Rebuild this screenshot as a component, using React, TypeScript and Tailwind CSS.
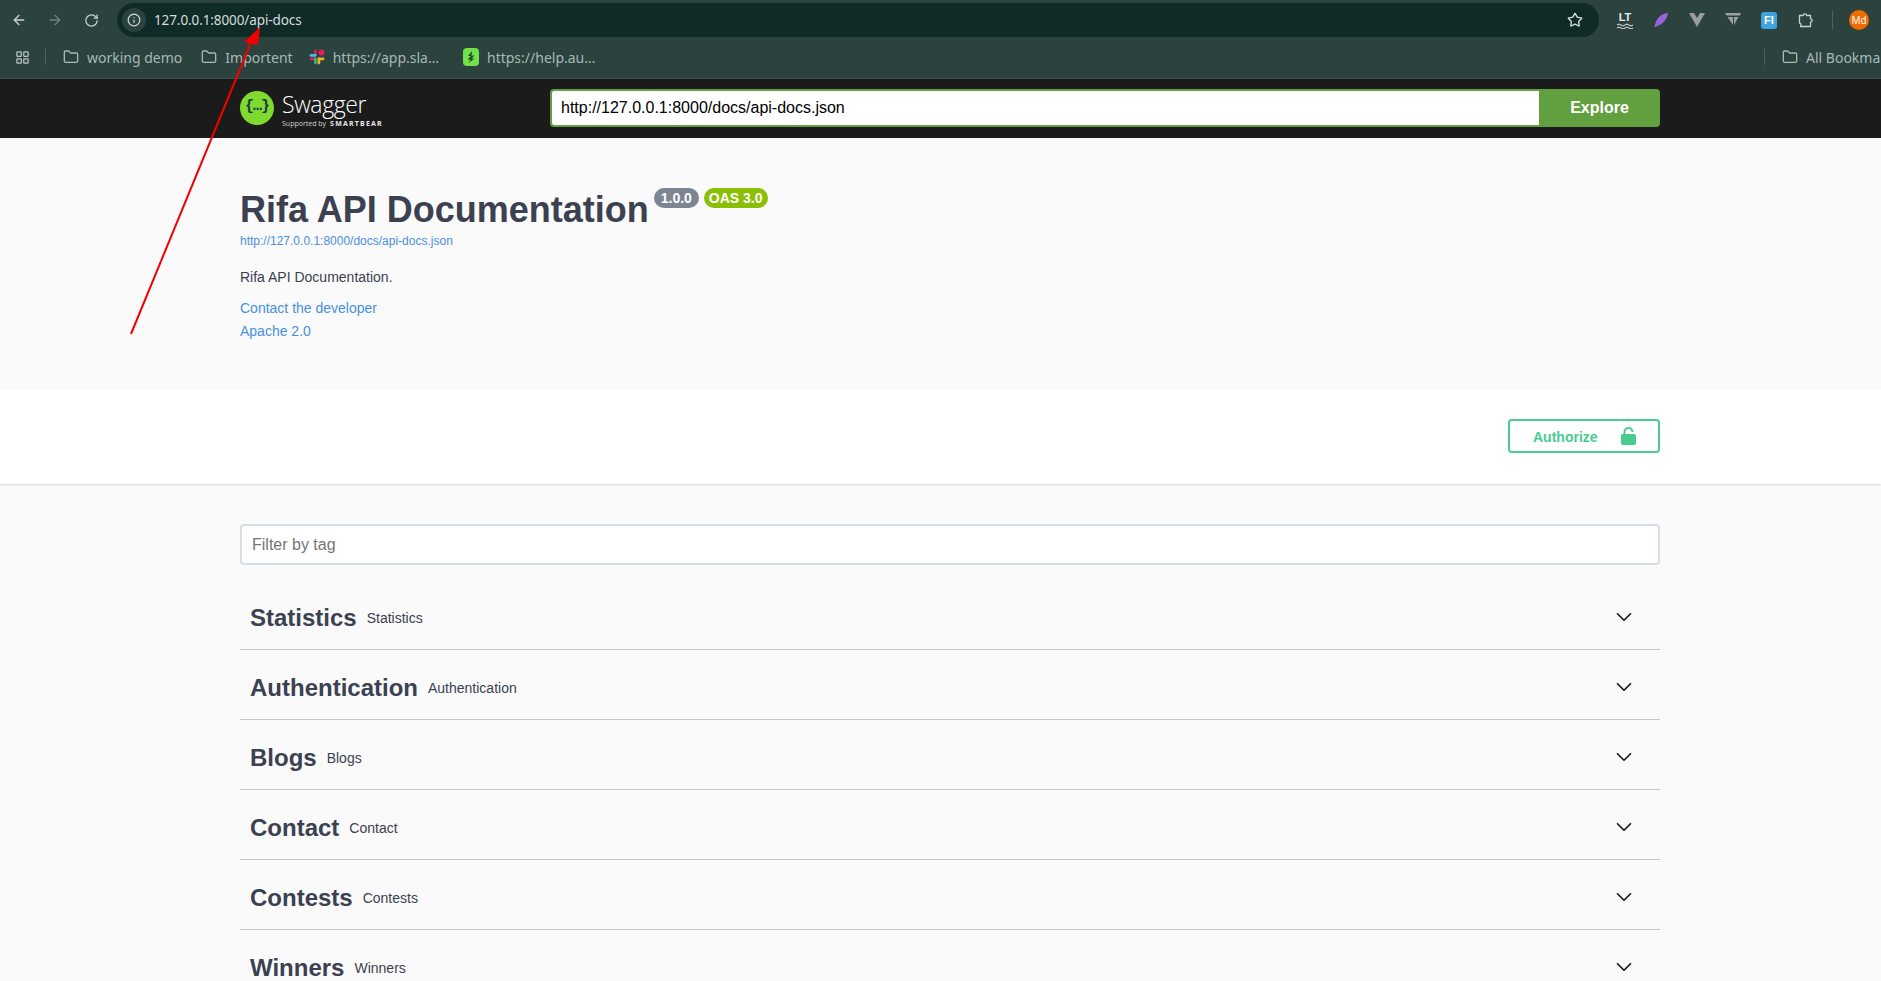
import { ArrowLeft, ArrowRight, ChevronDown, Folder, Info, LayoutGrid, RotateCw, Star } from "lucide-react"

const tags = [
  ["Statistics", "Statistics"],
  ["Authentication", "Authentication"],
  ["Blogs", "Blogs"],
  ["Contact", "Contact"],
  ["Contests", "Contests"],
  ["Winners", "Winners"],
]

function Bookmark({ icon, label, className }: { icon: React.ReactNode; label: string; className?: string }) {
  return (
    <div className={`flex items-center gap-2 whitespace-nowrap text-[14px] text-[#a7b8b5] ${className ?? ""}`}>
      {icon}
      <span>{label}</span>
    </div>
  )
}

function SlackIcon() {
  return (
    <svg width="16" height="16" viewBox="0 0 16 16" className="shrink-0">
      <rect x="5" y="0.500" width="2.800" height="7" rx="1.400" fill="#e01e5a" />
      <rect x="0.500" y="5" width="7" height="2.800" rx="1.400" fill="#36c5f0" />
      <circle cx="12.500" cy="3.500" r="3" fill="#e01e5a" />
      <rect x="8.500" y="8.500" width="7" height="2.800" rx="1.400" fill="#ecb22e" />
      <rect x="8.500" y="8.500" width="2.800" height="7" rx="1.400" fill="#ecb22e" />
      <rect x="0.500" y="8.500" width="7" height="2.800" rx="1.400" fill="#e01e5a" />
      <rect x="5" y="8.500" width="2.800" height="7" rx="1.400" fill="#2eb67d" />
    </svg>
  )
}

function TreeIcon() {
  return (
    <svg width="16" height="18" viewBox="0 0 16 18" className="shrink-0">
      <rect width="16" height="18" rx="4" fill="#72e04a" />
      <path d="M9 3 5 8h3L4.500 11.500h3L5.500 15l6-4.500h-3l3-3H8.500z" fill="#1f4a2a" />
    </svg>
  )
}

function LockIcon() {
  return (
    <svg width="15" height="18" viewBox="0 0 15 18" className="shrink-0">
      <path d="M3.500 8V5a4 4 0 0 1 8 0" fill="none" stroke="#49cc90" strokeWidth="2" />
      <rect x="0" y="7" width="15" height="11" rx="2" fill="#49cc90" />
    </svg>
  )
}

function ExtensionIcons() {
  return (
    <div className="flex items-center">
      <div className="flex w-[36px] flex-col items-center leading-none text-[#e8eeec]">
        <span className="font-['Liberation_Sans',sans-serif] text-[11px] font-bold leading-[11px]">LT</span>
        <svg width="16" height="6" viewBox="0 0 16 6">
          <path d="M0 2q2-2 4 0t4 0 4 0 4 0M0 5q2-2 4 0t4 0 4 0 4 0" fill="none" stroke="#e8eeec" strokeWidth="1" />
        </svg>
      </div>
      <div className="flex w-[36px] justify-center">
        <svg width="16" height="16" viewBox="0 0 16 16">
          <path d="M15 1C9 1 3 6 2 13l-1 2 1 0C9 13 14 8 15 1z" fill="#9b63d8" />
        </svg>
      </div>
      <div className="flex w-[36px] justify-center">
        <svg width="16" height="14" viewBox="0 0 16 14">
          <path d="M0 0h5l3 5 3-5h5L8 14z" fill="#9a9f9d" />
        </svg>
      </div>
      <div className="flex w-[36px] justify-center">
        <svg width="16" height="14" viewBox="0 0 16 14">
          <path d="M0 0h16l-1 2.500H1.500zM2.500 4h5.500v8zM9 4h4.500L9 12z" fill="#9a9f9d" />
        </svg>
      </div>
      <div className="flex w-[36px] justify-center">
        <div className="flex h-[17px] w-[16px] items-center justify-center rounded-[3px] bg-[#3fa3e0] font-['Liberation_Sans',sans-serif] text-[11px] font-bold text-white">
          FI
        </div>
      </div>
      <div className="flex w-[38px] justify-center">
        <svg width="16" height="16" viewBox="0 0 16 16" fill="none" stroke="#c9d4d1" strokeWidth="1.300">
          <path d="M1.500 3.500h3.700a1.700 1.700 0 1 1 3.400 0h3.900v3.300a1.700 1.700 0 1 1 0 3.400v4.300H2.500c.8-1.300.8-3-1-3.500z" strokeLinejoin="round" />
        </svg>
      </div>
    </div>
  )
}

export default function App() {
  return (
    <div className="relative h-[981px] overflow-hidden bg-[#fafafa] font-['Liberation_Sans',sans-serif] text-[#3b4151]">
      {/* browser chrome */}
      <div className="h-[79px] border-b border-[#3c524e] bg-[#2b423e] font-['Noto_Sans',sans-serif]">
        <div className="flex h-[40px] items-center">
          <div className="flex w-[117px] items-center pl-[1px] text-[#c9d4d1]">
            <div className="flex w-[36px] justify-center">
              <ArrowLeft size={16} />
            </div>
            <div className="flex w-[36px] justify-center text-[#6f827e]">
              <ArrowRight size={16} />
            </div>
            <div className="flex w-[36px] justify-center">
              <RotateCw size={15} />
            </div>
          </div>
          <div className="flex h-[34px] w-[1482px] items-center justify-between rounded-full bg-[#102a27] pl-[5px] pr-[16px]">
            <div className="flex items-center gap-[8px]">
              <div className="flex h-[24px] w-[24px] items-center justify-center rounded-full bg-[#2b423e] text-[#d5dedb]">
                <Info size={14} />
              </div>
              <span className="text-[13.500px] tracking-[-0.1px] text-[#d5dedb]">127.0.0.1:8000/api-docs</span>
            </div>
            <Star size={16} className="text-[#d5dedb]" />
          </div>
          <div className="flex items-center pl-[8px]">
            <ExtensionIcons />
            <div className="mx-[7px] h-[18px] w-px bg-[#4c625e]" />
            <div className="ml-[9px] flex h-[20px] w-[20px] items-center justify-center rounded-full bg-[#ef6c00] text-[10px] text-white">
              Md
            </div>
          </div>
        </div>
        <div className="flex h-[34px] items-center overflow-hidden pl-[15px]">
          <LayoutGrid size={15} className="shrink-0 text-[#b8c6c3]" />
          <div className="mx-[15px] h-[16px] w-px shrink-0 bg-[#4c625e]" />
          <div className="flex w-[1704px] shrink-0 items-center pl-[2px]">
            <Bookmark icon={<Folder size={16} />} label="working demo" />
            <Bookmark icon={<Folder size={16} />} label="Importent" className="ml-[19px]" />
            <Bookmark icon={<SlackIcon />} label="https://app.sla…" className="ml-[16px]" />
            <Bookmark icon={<TreeIcon />} label="https://help.au…" className="ml-[24px]" />
            <div className="ml-auto h-[16px] w-px bg-[#4c625e]" />
          </div>
          <div className="ml-[17px] shrink-0">
            <Bookmark icon={<Folder size={16} />} label="All Bookmarks" />
          </div>
        </div>
      </div>

      {/* swagger top bar */}
      <div className="h-[59px] bg-[#1b1b1b]">
        <div className="ml-[240px] flex h-full w-[1420px] items-center pb-[2px]">
          <div className="flex w-[310px] items-center gap-[8px]">
            <div className="flex h-[34px] w-[34px] items-center justify-center rounded-full bg-[#7fd92f] font-['Liberation_Mono',monospace] text-[15px] font-bold tracking-[-1px] text-[#173646]">
              {"{…}"}
            </div>
            <div className="flex flex-col pt-[3px] text-white">
              <span className="font-['Open_Sans',sans-serif] text-[23px] font-light leading-[27px] tracking-[-0.4px]">Swagger</span>
              <span className="flex items-center gap-[4px] whitespace-nowrap pt-[1px] font-['Open_Sans',sans-serif] text-[7px] leading-[9px] text-[#d0d0d0]">
                <span>Supported by</span>
                <span className="text-[7px] font-bold tracking-[1.200px] text-[#e8e8e8]">SMARTBEAR</span>
              </span>
            </div>
          </div>
          <div className="flex h-[38px] flex-1 items-stretch">
            <div className="flex flex-1 items-center rounded-l-[4px] border-2 border-r-0 border-[#62a03f] bg-white pl-[9px] text-[16px] text-black">
              http://127.0.0.1:8000/docs/api-docs.json
            </div>
            <div className="flex w-[121px] items-center justify-center rounded-r-[4px] bg-[#62a03f] text-[16px] font-bold text-white">
              Explore
            </div>
          </div>
        </div>
      </div>

      {/* info */}
      <div className="h-[252px] bg-[#fafafa]">
        <div className="ml-[240px] w-[1420px] pt-[48px]">
          <div className="flex items-start">
            <h1 className="text-[36px] font-bold leading-[48px]">Rifa API Documentation</h1>
            <div className="flex gap-[5px] pl-[5px] pt-[2px]">
              <span className="flex h-[20px] items-center rounded-[57px] bg-[#7d8492] px-[7px] text-[14px] font-bold text-white">1.0.0</span>
              <span className="flex h-[20px] items-center rounded-[57px] bg-[#89bf04] px-[5px] text-[14px] font-bold text-white">OAS 3.0</span>
            </div>
          </div>
          <div className="text-[12px] leading-[14px] text-[#4990e2]">http://127.0.0.1:8000/docs/api-docs.json</div>
          <p className="mt-[20px] text-[14px] leading-[18px]">Rifa API Documentation.</p>
          <p className="mt-[13px] text-[14px] leading-[18px] text-[#4990e2]">Contact the developer</p>
          <p className="mt-[5px] text-[14px] leading-[18px] text-[#4990e2]">Apache 2.0</p>
        </div>
      </div>

      {/* authorize */}
      <div className="h-[94px] bg-white shadow-[0_1px_2px_0_rgba(0,0,0,0.15)]">
        <div className="ml-[240px] flex h-full w-[1420px] items-start justify-end pt-[29px]">
          <div className="flex h-[34px] w-[152px] items-center justify-between rounded-[4px] border-2 border-[#49cc90] pl-[23px] pr-[22px] text-[14px] font-bold text-[#49cc90]">
            <span className="pt-[2px]">Authorize</span>
            <LockIcon />
          </div>
        </div>
      </div>

      {/* tags */}
      <div className="ml-[240px] w-[1420px] pt-[40px]">
        <div className="flex h-[41px] items-center rounded-[4px] border-2 border-[#d8dde7] bg-white pl-[10px] text-[16px] text-[#757575]">
          Filter by tag
        </div>
        <div className="mt-[15px]">
          {tags.map(([name, desc]) => (
            <div key={name} className="flex h-[70px] items-center justify-between border-b border-[#c4c6ca] pl-[10px] pr-[23px] pt-[6px]">
              <div className="flex items-center gap-[10px]">
                <span className="text-[24px] font-bold leading-[30px]">{name}</span>
                <span className="text-[14px] leading-[18px]">{desc}</span>
              </div>
              <ChevronDown size={26} strokeWidth={1.6} className="mb-[2px] text-[#1b1b1b]" />
            </div>
          ))}
        </div>
      </div>

      {/* annotation arrow */}
      <svg width="1881" height="981" className="pointer-events-none absolute left-0 top-0">
        <line x1="131" y1="334" x2="252" y2="40" stroke="#f00000" strokeWidth="2" />
        <path d="M260 27 244 42 258 45z" fill="#f00000" />
      </svg>
    </div>
  )
}
